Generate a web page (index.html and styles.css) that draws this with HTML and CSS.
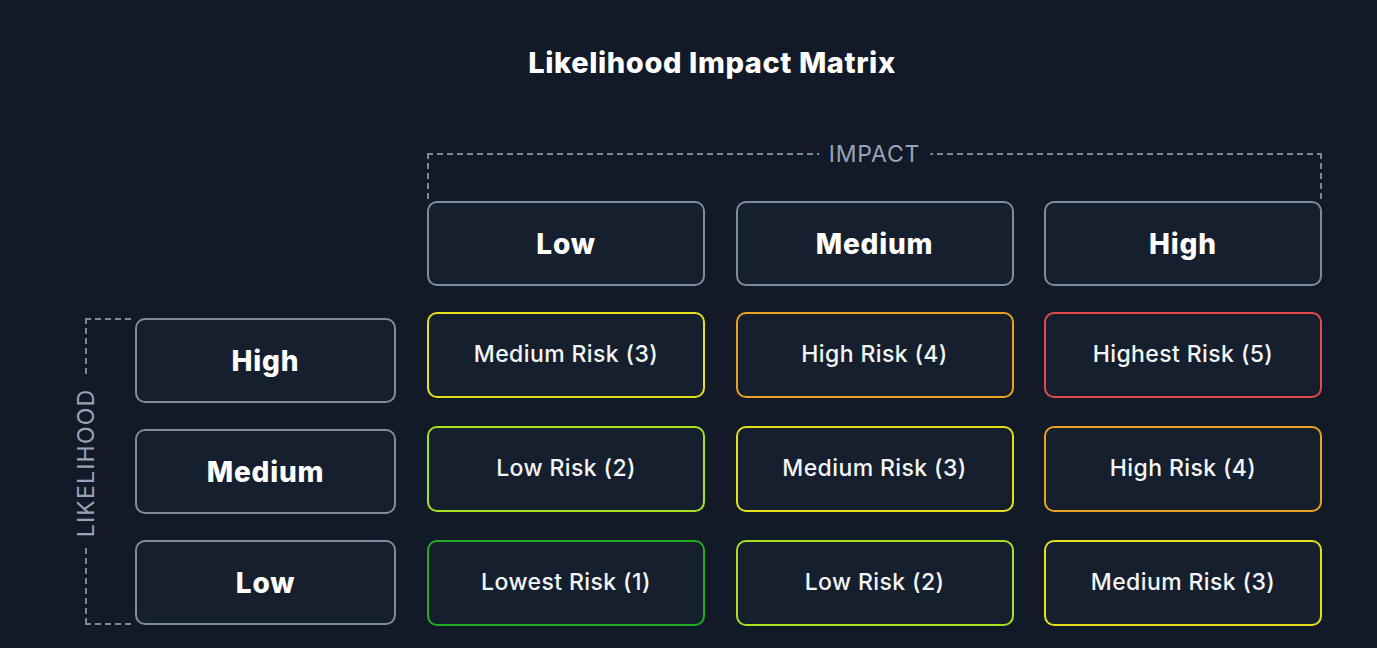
FILE: index.html
```html
<!DOCTYPE html>
<html>
<head>
    <meta charset="utf-8">
    <title>Likelihood Impact Matrix</title>
    <link rel="stylesheet" href="styles.css">
</head>
<body>
    <div class="board">
        <h1>Likelihood Impact Matrix</h1>

        <div class="impact-bracket">
            <span class="axis-label">IMPACT</span>
        </div>

        <div class="col-heads">
            <div class="head">Low</div>
            <div class="head">Medium</div>
            <div class="head">High</div>
        </div>

        <div class="matrix-body">
            <div class="row-side">
                <div class="likelihood-bracket">
                    <span class="axis-label vertical">LIKELIHOOD</span>
                </div>
                <div class="row-heads">
                    <div class="head">High</div>
                    <div class="head">Medium</div>
                    <div class="head">Low</div>
                </div>
            </div>

            <div class="cells">
                <div class="cell risk-3">Medium Risk (3)</div>
                <div class="cell risk-4">High Risk (4)</div>
                <div class="cell risk-5">Highest Risk (5)</div>

                <div class="cell risk-2">Low Risk (2)</div>
                <div class="cell risk-3">Medium Risk (3)</div>
                <div class="cell risk-4">High Risk (4)</div>

                <div class="cell risk-1">Lowest Risk (1)</div>
                <div class="cell risk-2">Low Risk (2)</div>
                <div class="cell risk-3">Medium Risk (3)</div>
            </div>
        </div>
    </div>
</body>
</html>
```

FILE: styles.css
```css
body {
    margin: 0;
    background: #121a27;
    color: #f8fafc;
    font-family: Inter, "Noto Sans", sans-serif;
}
.board {
    width: 1254px;
    margin-left: 85px;
    padding-top: 45px;
}
h1 {
    margin: 0;
    text-align: center;
    font-size: 29px;
    line-height: 36px;
    font-weight: 800;
    letter-spacing: 0.6px;
    color: #ffffff;
}

/* dashed brackets around the axes */
.impact-bracket {
    position: relative;
    box-sizing: border-box;
    width: 895px;
    height: 48px;
    margin: 72px 0 0 342px;
    background:
        repeating-linear-gradient(90deg, #7d889b 0 6px, transparent 6px 10px) top left / 100% 2px no-repeat,
        repeating-linear-gradient(180deg, #7d889b 0 6px, transparent 6px 10px) top left / 2px 100% no-repeat,
        repeating-linear-gradient(180deg, #7d889b 0 6px, transparent 6px 10px) top right / 2px 100% no-repeat;
}
.axis-label {
    position: absolute;
    left: 50%;
    top: 1px;
    transform: translate(-50%, -50%);
    padding: 0 10px;
    background: #121a27;
    color: #97a3b8;
    font-size: 23px;
    line-height: 24px;
    letter-spacing: 0.8px;
    white-space: nowrap;
}
.likelihood-bracket {
    position: relative;
    width: 50px;
    flex: none;
    background:
        repeating-linear-gradient(90deg, #7d889b 0 6px, transparent 6px 10px) top left / 100% 2px no-repeat,
        repeating-linear-gradient(90deg, #7d889b 0 6px, transparent 6px 10px) bottom left / 100% 2px no-repeat,
        repeating-linear-gradient(180deg, #7d889b 0 6px, transparent 6px 10px) top left / 2px 100% no-repeat;
}
.axis-label.vertical {
    left: 1px;
    top: 145px;
    letter-spacing: 1.2px;
    transform: translate(-50%, -50%) rotate(-90deg);
}

/* header boxes */
.col-heads {
    display: grid;
    grid-template-columns: repeat(3, 278px);
    column-gap: 30.5px;
    margin-left: 342px;
}
.head {
    box-sizing: border-box;
    height: 85px;
    display: flex;
    align-items: center;
    justify-content: center;
    background: #161f2d;
    border: 2px solid #7f8ba0;
    border-radius: 10px;
    font-size: 28px;
    font-weight: 800;
    letter-spacing: 0.8px;
    color: #ffffff;
}

.matrix-body {
    display: flex;
    margin-top: 26px;
}
.row-side {
    display: flex;
    width: 311px;
    margin: 6px 31px 0 0;
    align-self: flex-start;
}
.row-heads {
    display: flex;
    flex-direction: column;
    gap: 26px;
    flex: 1;
}

/* risk cells */
.cells {
    display: grid;
    grid-template-columns: repeat(3, 278px);
    grid-auto-rows: 86px;
    column-gap: 30.5px;
    row-gap: 28px;
}
.cell {
    box-sizing: border-box;
    display: flex;
    align-items: center;
    justify-content: center;
    padding-bottom: 3px;
    background: #161f2d;
    border: 2px solid;
    border-radius: 10px;
    font-size: 23px;
    font-weight: 500;
    letter-spacing: 0.4px;
    color: #f3f5f8;
}
.risk-1 { border-color: #20ad22; }
.risk-2 { border-color: #a6e222; }
.risk-3 { border-color: #e4e01c; }
.risk-4 { border-color: #eca21e; }
.risk-5 { border-color: #e44a4c; }
```
